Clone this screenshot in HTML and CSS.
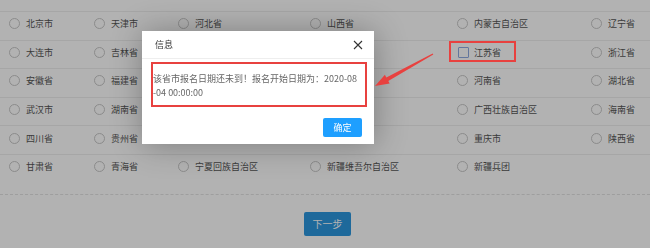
FILE: index.html
```html
<!DOCTYPE html>
<html lang="zh-CN">
<head>
  <meta charset="UTF-8">
  <title>选择省份</title>
  <link rel="stylesheet" href="styles.css">
</head>
<body>

  <div class="page">
    <div class="province-list">
      <div class="row">
        <label class="item"><span class="radio"></span>北京市</label>
        <label class="item"><span class="radio"></span>天津市</label>
        <label class="item"><span class="radio"></span>河北省</label>
        <label class="item"><span class="radio"></span>山西省</label>
        <label class="item"><span class="radio"></span>内蒙古自治区</label>
        <label class="item"><span class="radio"></span>辽宁省</label>
      </div>
      <div class="row">
        <label class="item"><span class="radio"></span>大连市</label>
        <label class="item"><span class="radio"></span>吉林省</label>
        <span class="item"></span>
        <span class="item"></span>
        <label class="item"><span class="radio focus"></span>江苏省</label>
        <label class="item"><span class="radio"></span>浙江省</label>
      </div>
      <div class="row">
        <label class="item"><span class="radio"></span>安徽省</label>
        <label class="item"><span class="radio"></span>福建省</label>
        <span class="item"></span>
        <span class="item"></span>
        <label class="item"><span class="radio"></span>河南省</label>
        <label class="item"><span class="radio"></span>湖北省</label>
      </div>
      <div class="row">
        <label class="item"><span class="radio"></span>武汉市</label>
        <label class="item"><span class="radio"></span>湖南省</label>
        <span class="item"></span>
        <span class="item"></span>
        <label class="item"><span class="radio"></span>广西壮族自治区</label>
        <label class="item"><span class="radio"></span>海南省</label>
      </div>
      <div class="row">
        <label class="item"><span class="radio"></span>四川省</label>
        <label class="item"><span class="radio"></span>贵州省</label>
        <span class="item"></span>
        <span class="item"></span>
        <label class="item"><span class="radio"></span>重庆市</label>
        <label class="item"><span class="radio"></span>陕西省</label>
      </div>
      <div class="row last">
        <label class="item"><span class="radio"></span>甘肃省</label>
        <label class="item"><span class="radio"></span>青海省</label>
        <label class="item"><span class="radio"></span>宁夏回族自治区</label>
        <label class="item"><span class="radio"></span>新疆维吾尔自治区</label>
        <label class="item"><span class="radio"></span>新疆兵团</label>
      </div>
    </div>

    <div class="actions">
      <button class="btn-next">下一步</button>
    </div>
  </div>

  <!-- 遮罩 -->
  <div class="shade"></div>

  <!-- 标注 -->
  <svg class="marks" width="650" height="248" viewBox="0 0 650 248">
    <rect x="450" y="42" width="65" height="19" fill="none" stroke="#e8413f" stroke-width="2"/>
    <polygon fill="#e8413f" points="433.3,54.5 388.3,81 389.7,83.6 375,86 384.9,74.8 386.3,77.4 432.7,53.5"/>
  </svg>

  <!-- 弹窗 -->
  <div class="dialog">
    <div class="dialog-title">
      <span>信息</span>
      <svg class="close" width="10" height="10" viewBox="0 0 10 10">
        <path d="M1 1 L9 9 M9 1 L1 9" stroke="#333" stroke-width="1.1" fill="none"/>
      </svg>
    </div>
    <div class="dialog-body">
      <div class="msg">该省市报名日期还未到！报名开始日期为：2020-08<br>-04 00:00:00</div>
    </div>
    <div class="dialog-footer">
      <button class="btn-ok">确定</button>
    </div>
  </div>

</body>
</html>
```

FILE: styles.css
```css
body {
  margin: 0;
  background-color: #fff;
  font-family: "Microsoft YaHei", "Noto Sans CJK SC", sans-serif;
  font-size: 9px;
  color: #555;
}

.page {
  width: 650px;
  height: 248px;
  overflow: hidden;
}

.province-list {
  padding-top: 11px;
}

.row {
  display: grid;
  grid-template-columns: 85px 84px 132px 147px 134px 1fr;
  padding-left: 9px;
  height: 28.6px;
  box-sizing: border-box;
  border-top: 1px solid #eee;
  align-items: center;
  padding-bottom: 4px;
}

.row.last {
  border-bottom: 1px dashed #e2e2e2;
  height: 41px;
  padding-bottom: 16px;
}

.item {
  display: flex;
  align-items: center;
  white-space: nowrap;
}

.radio {
  width: 9px;
  height: 9px;
  border: 1px solid #c8c8c8;
  border-radius: 50%;
  margin-right: 6px;
  flex: none;
}

.radio.focus {
  border-radius: 1px;
  border-color: #8fa9e0;
  margin-left: 1px;
  margin-right: 5px;
}

.actions {
  display: flex;
  justify-content: center;
  padding-left: 5px;
  margin-top: 17px;
}

.btn-next {
  width: 47px;
  height: 24px;
  border: none;
  border-radius: 2px;
  background-color: #2b97df;
  color: #fff;
  font-family: inherit;
  font-size: 10px;
  padding: 0;
}

.shade {
  position: fixed;
  left: 0;
  top: 0;
  width: 100%;
  height: 100%;
  background-color: rgba(0, 0, 0, 0.3);
}

.marks {
  position: absolute;
  left: 0;
  top: 0;
  z-index: 3;
}

.dialog {
  position: absolute;
  left: 142px;
  top: 31px;
  width: 232px;
  height: 113px;
  background-color: #fff;
  box-shadow: 1px 1px 30px rgba(0, 0, 0, 0.3);
  z-index: 2;
}

.dialog-title {
  display: flex;
  justify-content: space-between;
  align-items: center;
  height: 27px;
  padding: 0 11px 0 13px;
  border-bottom: 1px solid #eee;
  color: #333;
}

.dialog-body {
  padding: 5px 9px 0 11px;
}

.msg {
  outline: 2px solid #e8413f;
  padding: 8px 0 5px 0;
  line-height: 14px;
  color: #666;
  height: 28px;
}

.dialog-footer {
  display: flex;
  justify-content: flex-end;
  padding: 13px 12px 0 0;
}

.btn-ok {
  width: 39px;
  height: 19px;
  border: none;
  border-radius: 2px;
  background-color: #1e9fff;
  color: #fff;
  font-family: inherit;
  font-size: 9px;
  padding: 0;
}
```
